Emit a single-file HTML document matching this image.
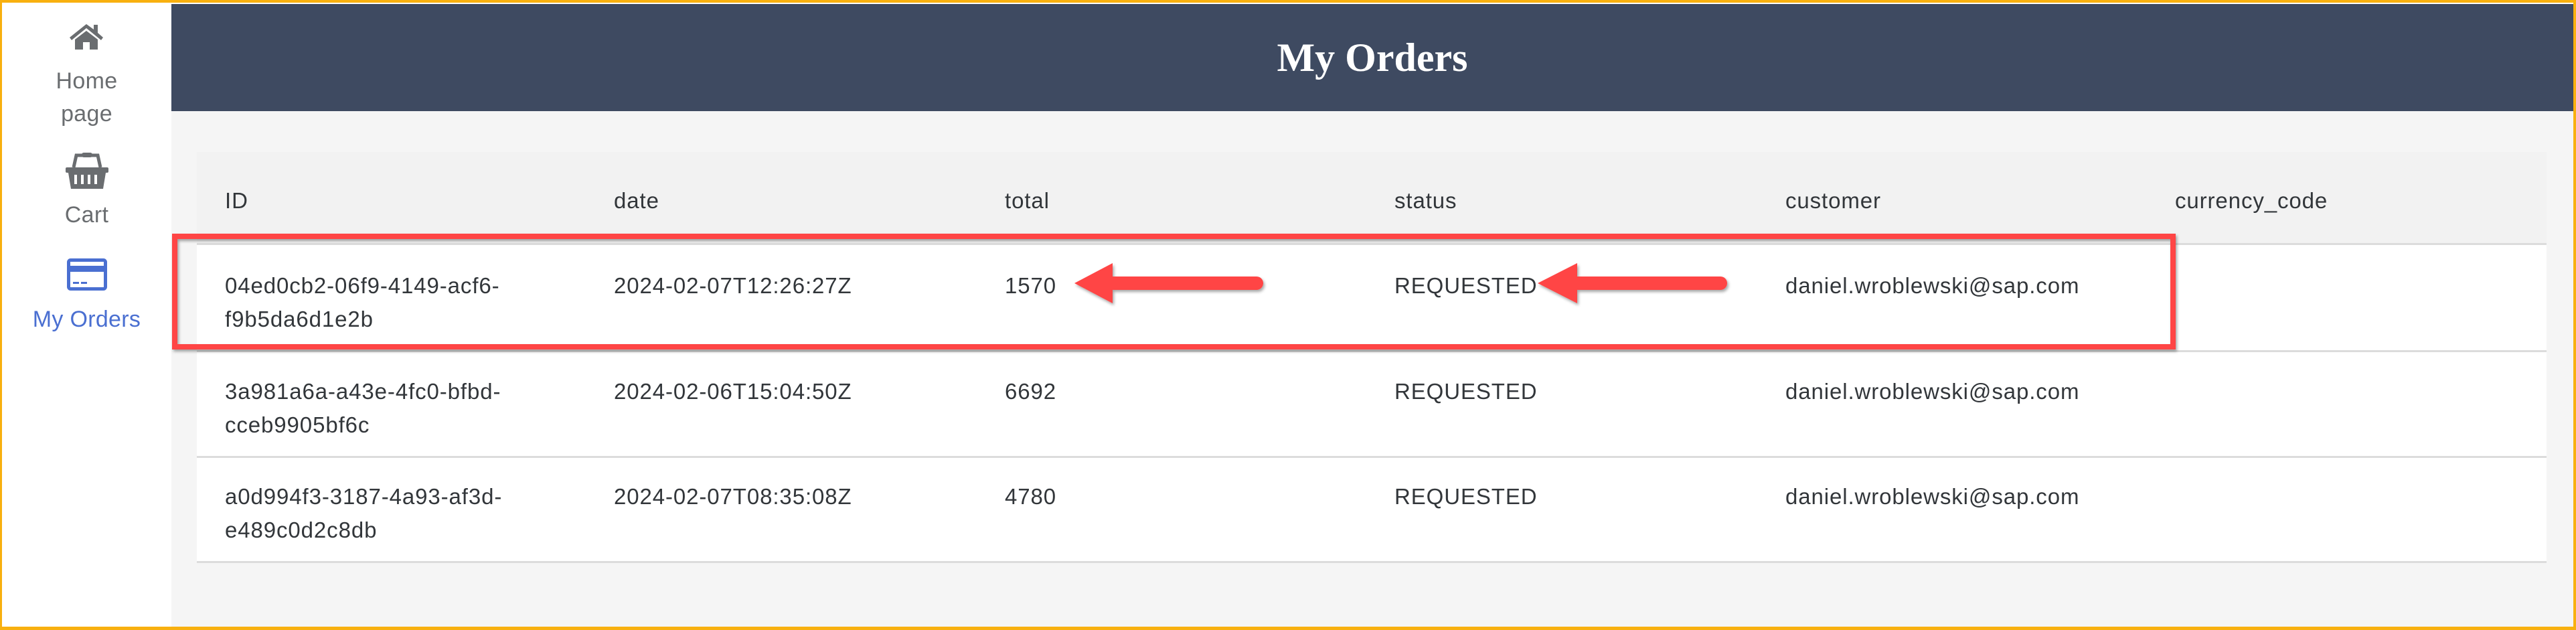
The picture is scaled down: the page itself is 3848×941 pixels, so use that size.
<!DOCTYPE html>
<html><head><style>
*{margin:0;padding:0;box-sizing:border-box}
html,body{width:3848px;height:941px;overflow:hidden;background:#f8b00f}
#frame{position:absolute;left:3px;top:4px;width:3841px;height:932px;background:#fff;overflow:hidden}
.side{position:absolute;left:0;top:0;width:253px;height:932px;background:#fff;font-family:"Liberation Sans",sans-serif;color:#6a6d70;font-size:34px;text-align:center;letter-spacing:0.3px}
.side .t{position:absolute;width:253px;left:0;line-height:40px}
.hdr{position:absolute;left:253px;top:2px;width:3588px;height:160px;background:#3e4a61;color:#fff;font-family:"Liberation Serif",serif;font-weight:bold;font-size:60px;text-align:center;line-height:160px}
.main{position:absolute;left:253px;top:162px;width:3588px;height:770px;background:#f5f5f5}
.tbl{position:absolute;left:291px;top:223px;width:3510px;height:612px;background:#fff;font-family:"Liberation Sans",sans-serif;font-size:33px;color:#32363a}
.hr{position:absolute;left:0;top:0;width:3510px;height:139px;background:#f2f2f2;border-bottom:3px solid #dcdcdc}
.row{position:absolute;left:0;width:3510px;height:157px;border-bottom:3px solid #dcdcdc}
.c{position:absolute;line-height:50px;letter-spacing:0.9px;white-space:nowrap}
</style></head><body>
<div id="frame">
<div class="side">
<svg style="position:absolute;left:101px;top:30px" width="50" height="40" viewBox="0 0 50 40"><path d="M25 2 L0 22 L3 26 L25 8 L47 26 L50 22 L42 15 L42 3 L36 3 L36 10 Z" fill="#6a6d70"/><path d="M8 25 L25 12 L42 25 L42 40 L30 40 L30 29 L20 29 L20 40 L8 40 Z" fill="#6a6d70"/></svg>
<div class="t" style="top:97px">Home</div>
<div class="t" style="top:146px">page</div>
<svg style="position:absolute;left:95px;top:224px" width="64" height="56" viewBox="0 0 64 56"><path d="M12 22 L16 4 L48 4 L52 22" fill="none" stroke="#6a6d70" stroke-width="5"/><rect x="24" y="0" width="16" height="7" rx="3" fill="#6a6d70"/><rect x="0" y="22" width="64" height="8" rx="2" fill="#6a6d70"/><path d="M4 30 L60 30 L56 54 L8 54 Z" fill="#6a6d70"/><g fill="#fff"><rect x="13" y="33" width="4" height="14"/><rect x="23" y="33" width="4" height="14"/><rect x="33" y="33" width="4" height="14"/><rect x="43" y="33" width="4" height="14"/></g></svg>
<div class="t" style="top:297px">Cart</div>
<svg style="position:absolute;left:97px;top:382px" width="60" height="48" viewBox="0 0 60 48"><rect x="2.5" y="2.5" width="55" height="43" rx="3" fill="none" stroke="#4a6fd1" stroke-width="5"/><rect x="2" y="11" width="56" height="9" fill="#4a6fd1"/><rect x="9" y="35" width="9" height="3" fill="#4a6fd1"/><rect x="21" y="35" width="9" height="3" fill="#4a6fd1"/></svg>
<div class="t" style="top:453px;color:#4a6fd1">My Orders</div>
</div>
<div class="hdr">My Orders</div>
<div class="main"></div>
<div class="tbl">
<div class="hr">
<div class="c" style="left:42px;top:48px">ID</div>
<div class="c" style="left:623px;top:48px">date</div>
<div class="c" style="left:1207px;top:48px">total</div>
<div class="c" style="left:1789px;top:48px">status</div>
<div class="c" style="left:2373px;top:48px">customer</div>
<div class="c" style="left:2955px;top:48px">currency_code</div>
</div>
<div class="row" style="top:142px">
<div class="c" style="left:42px;top:33px">04ed0cb2-06f9-4149-acf6-<br>f9b5da6d1e2b</div>
<div class="c" style="left:623px;top:33px">2024-02-07T12:26:27Z</div>
<div class="c" style="left:1207px;top:33px">1570</div>
<div class="c" style="left:1789px;top:33px">REQUESTED</div>
<div class="c" style="left:2373px;top:33px">daniel.wroblewski@sap.com</div>
</div>
<div class="row" style="top:300px">
<div class="c" style="left:42px;top:33px">3a981a6a-a43e-4fc0-bfbd-<br>cceb9905bf6c</div>
<div class="c" style="left:623px;top:33px">2024-02-06T15:04:50Z</div>
<div class="c" style="left:1207px;top:33px">6692</div>
<div class="c" style="left:1789px;top:33px">REQUESTED</div>
<div class="c" style="left:2373px;top:33px">daniel.wroblewski@sap.com</div>
</div>
<div class="row" style="top:457px">
<div class="c" style="left:42px;top:33px">a0d994f3-3187-4a93-af3d-<br>e489c0d2c8db</div>
<div class="c" style="left:623px;top:33px">2024-02-07T08:35:08Z</div>
<div class="c" style="left:1207px;top:33px">4780</div>
<div class="c" style="left:1789px;top:33px">REQUESTED</div>
<div class="c" style="left:2373px;top:33px">daniel.wroblewski@sap.com</div>
</div>
</div>
<svg style="position:absolute;left:0;top:0" width="3841" height="932">
<defs><filter id="s" x="-5%" y="-20%" width="110%" height="140%"><feDropShadow dx="2" dy="3" stdDeviation="2" flood-color="#000" flood-opacity="0.35"/></filter></defs>
<g filter="url(#s)">
<rect x="258" y="349" width="2985" height="165" fill="none" stroke="#ff4444" stroke-width="8"/>
<path d="M1602 419 L1659 389 L1659 409 L1874 409 A10 10 0 0 1 1874 429 L1659 429 L1659 449 Z" fill="#ff4444"/>
<path d="M2294 419 L2353 389 L2353 409 L2567 409 A10 10 0 0 1 2567 429 L2353 429 L2353 449 Z" fill="#ff4444"/>
</g>
</svg>
</div>
</body></html>
